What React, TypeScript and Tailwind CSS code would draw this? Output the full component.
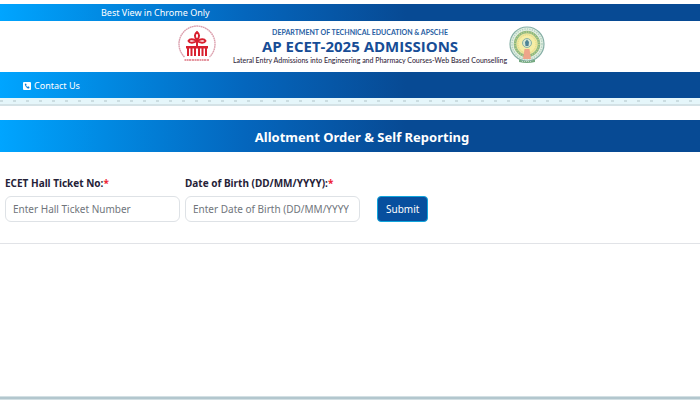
import React from 'react';

import { clsx } from 'clsx';

const BAR_GRADIENT = 'bg-linear-to-r from-[#00a5ff] via-[#0466bd] via-35% to-[#074a94] to-58%';

interface TextFieldProps {
  id: string;
  label: string;
  placeholder: string;
}

const TextField: React.FC<TextFieldProps> = ({ id, label, placeholder }) => (
  <div className="flex w-[25vw] flex-col gap-[5px]">
    <label className="text-[10px] leading-4 font-bold whitespace-nowrap text-[#252238]" htmlFor={id}>
      {label}
      <span className="text-[#ee2233]">*</span>
    </label>
    <input
      className="h-[26px] w-full rounded-md border border-[#dee2e6] bg-white pr-[10px] pl-[7px] text-[10px] text-[#212529] placeholder:text-[#70757c]"
      id={id}
      placeholder={placeholder}
      type="text"
    />
  </div>
);

const CouncilLogo: React.FC = () => (
  <svg aria-label="APSCHE" className="size-10 shrink-0" role="img" viewBox="0 0 40 40">
    <path
      d="M7.500 32 A18 18 0 1 1 32.500 32"
      fill="none"
      stroke="#dca0ae"
      strokeDasharray="1.800 .4"
      strokeWidth="1.400"
    />
    <g fill="none" stroke="#d8202f" strokeWidth="2">
      <path d="M20 15 C17 12 17.500 9 20 7 C22.500 9 23 12 20 15Z" />
      <path d="M20 16 C16 13.500 12.500 14 11.500 16 C12.500 18.500 17 18 20 16 C23 18 27.500 18.500 28.500 16 C27.500 14 24 13.500 20 16Z" />
      <path d="M20 14 V22" />
    </g>
    <path
      d="M9 21 H31 V23.500 H30 V31 H28 V23.500 H26.500 V31 H24.500 V23.500 H23 V31 H21 V23.500 H19 V31 H17 V23.500 H15.500 V31 H13.500 V23.500 H12 V31 H10 V23.500 H9Z"
      fill="#d8202f"
    />
    <path
      d="M7.500 35 H32.500"
      stroke="#dd7583"
      strokeDasharray="2 .5 1.500 .4 2.500 .6"
      strokeWidth="1.700"
    />
  </svg>
);

const StateEmblem: React.FC = () => (
  <svg
    aria-label="Government of Andhra Pradesh"
    className="size-10 shrink-0"
    role="img"
    viewBox="0 0 40 40"
  >
    <circle cx="20" cy="19" fill="#e6f1e5" r="17" stroke="#86afa6" strokeWidth="1.200" />
    <circle
      cx="20"
      cy="19"
      fill="none"
      r="15"
      stroke="#b5d3c2"
      strokeDasharray="1.500 1"
      strokeWidth="1.500"
    />
    <circle cx="20" cy="19" fill="#e9e6a0" r="12" stroke="#8ab581" strokeWidth="2.500" />
    <circle
      cx="20"
      cy="19"
      fill="none"
      r="12"
      stroke="#b9cf88"
      strokeDasharray="1 1.500"
      strokeWidth="2"
    />
    <circle
      cx="20"
      cy="19"
      fill="#f5eda6"
      r="9"
      stroke="#ead77a"
      strokeDasharray="1 1"
      strokeWidth="1"
    />
    <circle cx="20" cy="18" fill="#d7e7d2" r="4.500" stroke="#8bb3a3" strokeWidth="1" />
    <path d="M20 14.500 L22 17 L21.500 21 H18.500 L18 17Z" fill="#4d8496" />
    <path d="M17.500 24 H22.500 L24 34 H16Z" fill="#eea58a" />
    <path d="M12 34.500 Q20 38 28 34.500 V37 Q20 39 12 37Z" fill="#75a982" />
    <path d="M15 36.500 H25" stroke="#d8e7d7" strokeDasharray="1 1" strokeWidth=".7" />
  </svg>
);

const ContactIcon: React.FC = () => (
  <svg aria-hidden="true" className="size-2" viewBox="0 0 16 16">
    <rect fill="#fff" height="16" rx="2" width="16" />
    <path
      d="M3.500 4 L6 3 L7.300 6 L6 7.200 Q7 9.200 8.800 10 L10 8.700 L13 10 L12.300 12.500 Q11 13.500 8 11.800 Q4 9 3.500 4Z"
      fill="#087fdc"
    />
  </svg>
);

const App: React.FC = () => {
  return (
    <div className="flex min-h-screen flex-col bg-white pt-1 font-['Noto_Sans','Open_Sans',sans-serif] text-[#212529]">
      <div className={clsx(BAR_GRADIENT, 'h-[17px] pl-[101px] text-[9px] leading-[18px] text-white')}>
        Best View in Chrome Only
      </div>

      <header className="flex items-start justify-center pt-1 pb-[7px] pl-6">
        <CouncilLogo />
        <div className="pt-[2px] pl-4 text-center whitespace-nowrap">
          <div className="pr-5">
            <p className="font-['Lato','Open_Sans',sans-serif] text-[7px] leading-[10px] font-bold text-[#2860a3]">
              DEPARTMENT OF TECHNICAL EDUCATION &amp; APSCHE
            </p>
            <h1 className="font-['Open_Sans','Noto_Sans',sans-serif] text-[15px] leading-[18px] font-bold text-[#174d96]">
              AP ECET-2025 ADMISSIONS
            </h1>
          </div>
          <p className="font-['Lato','Open_Sans',sans-serif] text-[7px] leading-[10px] font-medium text-[#33283d]">
            Lateral Entry Admissions into Engineering and Pharmacy Courses-Web Based Counselling
          </p>
        </div>
        <StateEmblem />
      </header>

      <nav className={clsx(BAR_GRADIENT, 'flex h-[26px] items-center px-[23px] pt-[2px]')}>
        <a className="flex items-center gap-[3px] text-[9px] text-white" href="#contact">
          <ContactIcon />
          Contact Us
        </a>
      </nav>
      <div className="flex h-2 items-center border-b-2 border-[#d4e2e6] bg-[#e5f6fa]">
        <div className="h-[2px] w-full bg-[repeating-linear-gradient(to_right,#cbdde1_0px,#cbdde1_3px,transparent_3px,transparent_13px)]" />
      </div>

      <main className="pt-[14px]">
        <h2
          className={clsx(
            BAR_GRADIENT,
            'h-8 pl-6 text-center text-[13px] leading-[34px] font-bold text-white',
          )}
        >
          Allotment Order &amp; Self Reporting
        </h2>
        <form
          className="flex items-end gap-[5px] border-b border-[#e1e3e7] px-[5px] pt-[23px] pb-[21px]"
          onSubmit={(event) => event.preventDefault()}
        >
          <TextField
            id="hallTicket"
            label="ECET Hall Ticket No:"
            placeholder="Enter Hall Ticket Number"
          />
          <TextField
            id="dateOfBirth"
            label="Date of Birth (DD/MM/YYYY):"
            placeholder="Enter Date of Birth (DD/MM/YYYY)"
          />
          <button
            className="ml-3 h-[26px] rounded-sm border border-[#10a5dc] bg-[#074f9e] px-2 text-[10px] text-white"
            type="submit"
          >
            Submit
          </button>
        </form>
      </main>

      <footer className="mt-auto h-1 border-y border-[#d3e0e4] bg-[#b3c7ce]" />
    </div>
  );
};

export default App;
